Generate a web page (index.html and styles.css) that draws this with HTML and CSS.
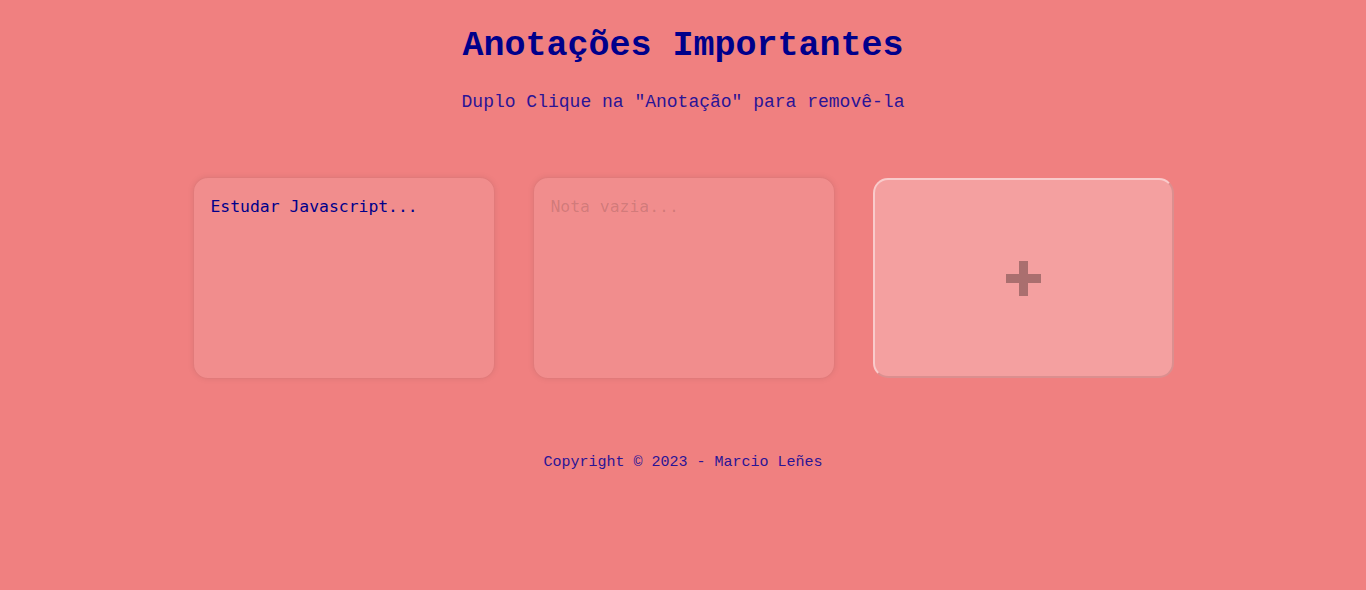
FILE: index.html
```html
<!DOCTYPE html>
<html lang="pt-BR">
<head>
<meta charset="utf-8">
<title>Anotações Importantes</title>
<link rel="stylesheet" href="styles.css">
</head>
<body>
<header class="header">
  <h1 class="title">Anotações Importantes</h1>
  <p class="subtitle">Duplo Clique na "Anotação" para removê-la</p>
</header>
<main class="notes">
  <textarea class="note" placeholder="Nota vazia...">Estudar Javascript...</textarea>
  <textarea class="note" placeholder="Nota vazia..."></textarea>
  <button class="add-note" type="button" aria-label="Adicionar nota">
    <svg width="35" height="35" viewBox="0 0 35 35" aria-hidden="true"><path d="M13 0h9v13h13v9H22v13h-9V22H0v-9h13z" fill="rgba(0,0,0,0.3)"/></svg>
  </button>
</main>
<footer class="footer">Copyright © 2023 - Marcio Leñes</footer>
</body>
</html>
```
FILE: styles.css
```css
html, body {
  margin: 0;
  padding: 0;
}
body {
  background: #f08080;
  font-family: "Liberation Mono", "Courier New", monospace;
  color: #00008b;
  min-height: 590px;
}
.header {
  display: flex;
  flex-direction: column;
  align-items: center;
  padding-top: 26px;
}
.title {
  margin: 0;
  font-size: 35px;
  line-height: 40px;
  font-weight: bold;
}
.subtitle {
  margin: 26px 0 0;
  font-size: 18px;
  line-height: 20px;
  color: #2a1496;
}
.notes {
  display: flex;
  justify-content: center;
  gap: 38px;
  margin-top: 65px;
}
.note {
  box-sizing: border-box;
  width: 302px;
  height: 202px;
  padding: 19px 17px 16px;
  border: 1px solid rgba(150, 40, 40, 0.18);
  border-radius: 15px;
  background: rgba(255, 255, 255, 0.1);
  box-shadow: 0 0 6px rgba(0, 0, 0, 0.08);
  font-family: "DejaVu Sans Mono", monospace;
  font-size: 16.4px;
  line-height: 19px;
  color: #00008b;
  resize: none;
  outline: none;
}
.note::placeholder {
  color: rgba(0, 0, 0, 0.15);
}
.add-note {
  box-sizing: border-box;
  width: 301px;
  height: 200px;
  margin-top: 1px;
  display: flex;
  align-items: center;
  justify-content: center;
  border: 2px solid;
  border-color: rgba(255, 255, 255, 0.45) rgba(0, 0, 0, 0.1) rgba(0, 0, 0, 0.1) rgba(255, 255, 255, 0.45);
  border-radius: 15px;
  background: rgba(255, 255, 255, 0.25);
  padding: 0;
  cursor: pointer;
}
.footer {
  text-align: center;
  margin-top: 75px;
  font-size: 15px;
  line-height: 18px;
  color: #2a1496;
}
```
